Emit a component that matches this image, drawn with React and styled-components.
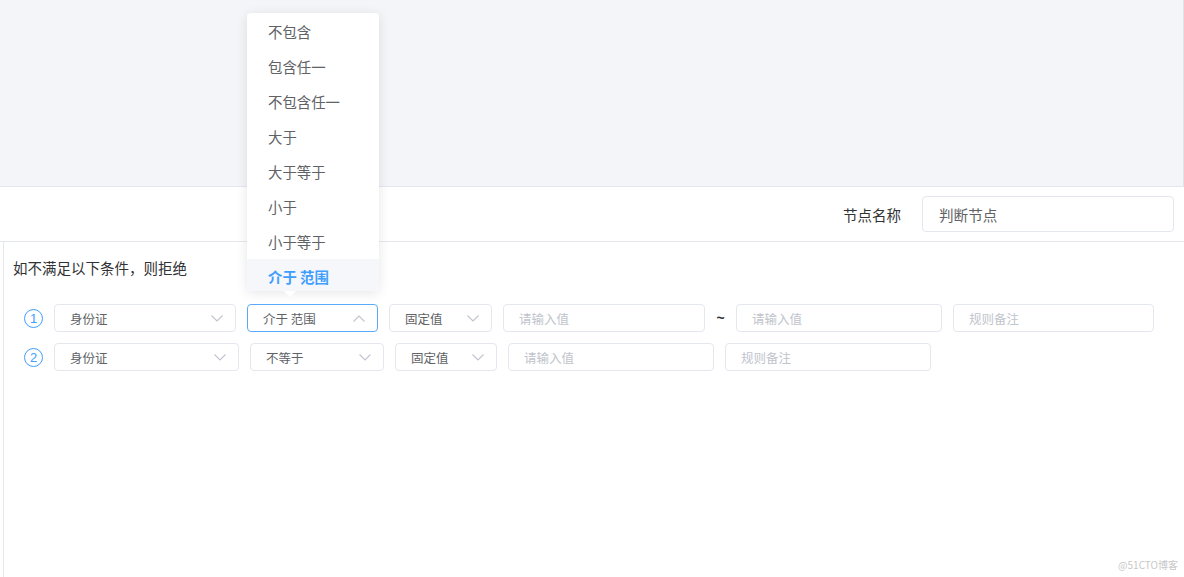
import React from "react";
import styled, { createGlobalStyle } from "styled-components";

const GlobalStyle = createGlobalStyle`
  html, body { margin: 0; padding: 0; }
  body {
    width: 1184px;
    height: 577px;
    overflow: hidden;
    background: #fff;
    font-family: "Noto Sans CJK SC", "Noto Sans", sans-serif;
  }
`;

const OPTIONS = ["不包含", "包含任一", "不包含任一", "大于", "大于等于", "小于", "小于等于", "介于 范围"];

export default function App() {
  return (
    <Page>
      <GlobalStyle />
      <Canvas />
      <Header>
        <Label>节点名称</Label>
        <TextBox w={252} h={36} big>判断节点</TextBox>
      </Header>
      <Body>
        <Title>如不满足以下条件，则拒绝</Title>
        <Rules>
          <Row>
            <Index>1</Index>
            <Select w={182} value="身份证" />
            <Select w={131} value="介于 范围" open>
              <Dropdown>
                <List>
                  {OPTIONS.map((o) => (
                    <Option key={o} active={o === "介于 范围"}>{o}</Option>
                  ))}
                </List>
              </Dropdown>
              <Arrow />
            </Select>
            <Select w={103} value="固定值" />
            <TextBox w={202} placeholder>请输入值</TextBox>
            <Tilde>~</Tilde>
            <TextBox w={206} placeholder>请输入值</TextBox>
            <TextBox w={201} placeholder>规则备注</TextBox>
          </Row>
          <Row>
            <Index>2</Index>
            <Select w={185} value="身份证" />
            <Select w={134} value="不等于" />
            <Select w={102} value="固定值" />
            <TextBox w={206} placeholder>请输入值</TextBox>
            <TextBox w={206} placeholder>规则备注</TextBox>
          </Row>
        </Rules>
      </Body>
      <Watermark>@51CTO博客</Watermark>
    </Page>
  );
}

function Select({ w, value, open, children }) {
  return (
    <SelectBox w={w} open={open}>
      <span>{value}</span>
      <Chevron up={open} />
      {children}
    </SelectBox>
  );
}

function Chevron({ up }) {
  return (
    <svg width="12" height="7" viewBox="0 0 12 7" fill="none">
      <path
        d={up ? "M0.5 6.5 L6 1 L11.5 6.5" : "M0.5 0.5 L6 6 L11.5 0.5"}
        stroke="#c0c4cc"
        strokeWidth="1.1"
      />
    </svg>
  );
}

const Page = styled.div`
  position: relative;
  display: flex;
  flex-direction: column;
  width: 1184px;
  height: 577px;
`;

const Canvas = styled.div`
  height: 186px;
  flex: none;
  background: #f3f5f8;
  border-bottom: 1px solid #e4e7ed;
  border-right: 1px solid #dfe3e9;
`;

const Header = styled.div`
  height: 54px;
  flex: none;
  display: flex;
  align-items: center;
  justify-content: flex-end;
  padding-right: 10px;
  border-bottom: 1px solid #e4e7ed;
`;

const Label = styled.span`
  font-size: 14.5px;
  color: #303133;
  margin-right: 21px;
`;

const TextBox = styled.div`
  box-sizing: border-box;
  width: ${(p) => p.w}px;
  height: ${(p) => p.h || 28}px;
  flex: none;
  display: flex;
  align-items: center;
  padding-left: ${(p) => (p.big ? 16 : 15)}px;
  border: 1px solid #e4e7ed;
  border-radius: 4px;
  font-size: ${(p) => (p.big ? 14.6 : 12.5)}px;
  color: ${(p) => (p.placeholder ? "#c0c4cc" : "#606266")};
  background: #fff;
`;

const Body = styled.div`
  flex: 1;
  margin-left: 3px;
  border-left: 1px solid #e4e7ed;
  padding: 16px 0 0 9px;
`;

const Title = styled.div`
  font-size: 14.5px;
  line-height: 20px;
  color: #303133;
`;

const Rules = styled.div`
  display: flex;
  flex-direction: column;
  gap: 11px;
  margin-top: 26px;
  padding-left: 11px;
`;

const Row = styled.div`
  display: flex;
  align-items: center;
  gap: 11px;
  height: 28px;
`;

const Index = styled.span`
  box-sizing: border-box;
  width: 19px;
  height: 19px;
  flex: none;
  border: 1px solid #409eff;
  border-radius: 50%;
  color: #409eff;
  font-family: "Liberation Sans", sans-serif;
  font-size: 13px;
  display: flex;
  align-items: center;
  justify-content: center;
`;

const SelectBox = styled.div`
  position: relative;
  box-sizing: border-box;
  width: ${(p) => p.w}px;
  height: 28px;
  flex: none;
  display: flex;
  align-items: center;
  justify-content: space-between;
  padding: 0 12px 0 15px;
  border: 1px solid ${(p) => (p.open ? "#5aa9fa" : "#e4e7ed")};
  border-radius: 4px;
  font-size: 12.5px;
  color: #606266;
  background: #fff;
`;

const Dropdown = styled.div`
  position: absolute;
  left: -1px;
  bottom: calc(100% + 14px);
  width: 132px;
  height: 278px;
  overflow: hidden;
  background: #fff;
  border-radius: 4px;
  box-shadow: 0 2px 12px rgba(0, 0, 0, 0.1);
  z-index: 2;
`;

const List = styled.ul`
  list-style: none;
  margin: 0;
  padding: 1px 0 0;
`;

const Option = styled.li`
  height: 35px;
  line-height: 35px;
  padding-left: 21px;
  font-size: 14.4px;
  color: ${(p) => (p.active ? "#409eff" : "#606266")};
  font-weight: ${(p) => (p.active ? 700 : 400)};
  background: ${(p) => (p.active ? "#f5f7fa" : "#fff")};
`;

const Arrow = styled.span`
  position: absolute;
  left: 36px;
  bottom: calc(100% + 8px);
  width: 0;
  height: 0;
  border-left: 6px solid transparent;
  border-right: 6px solid transparent;
  border-top: 6px solid #fff;
  z-index: 3;
`;

const Tilde = styled.span`
  width: 9px;
  flex: none;
  font-family: "Liberation Sans", sans-serif;
  font-size: 14px;
  font-weight: 700;
  color: #303133;
  text-align: center;
`;

const Watermark = styled.span`
  position: absolute;
  right: 6px;
  bottom: 5px;
  font-size: 10px;
  color: #c8c8c8;
`;
